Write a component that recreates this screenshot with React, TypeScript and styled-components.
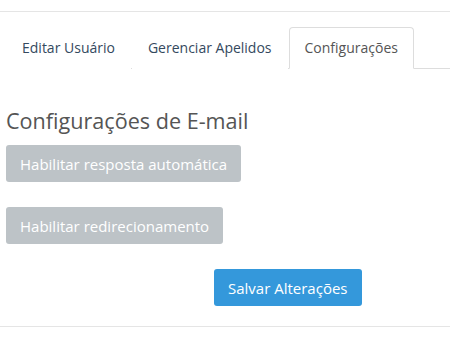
import React from 'react';
import styled, { createGlobalStyle } from 'styled-components';

const GlobalStyle = createGlobalStyle`
  body {
    margin: 0;
    background: #fff;
    font-family: "Open Sans", "Noto Sans", sans-serif;
  }
`;

const StyledPage = styled.div`
  width: 450px;
  height: 337px;
  overflow: hidden;
  padding-top: 11px;
  box-sizing: border-box;
`;

const StyledPanel = styled.div`
  border-top: 1px solid #e5e5e5;
  border-bottom: 1px solid #e5e5e5;
  padding: 15px 0 20px 6px;
`;

const StyledTabs = styled.ul`
  display: flex;
  margin: 0;
  padding: 0;
  list-style: none;
  border-bottom: 1px solid #ddd;
`;

const StyledTab = styled.li<TabProps>`
  margin-right: 1px;
  margin-bottom: -1px;
  padding: 10px 15px;
  font-size: 14px;
  line-height: 20px;
  color: ${props => (props.active ? '#555' : '#34495e')};
  background: #fff;
  border: 1px solid ${props => (props.active ? '#ddd' : 'transparent')};
  border-bottom-color: ${props => (props.active ? '#fff' : 'transparent')};
  border-radius: 4px 4px 0 0;
`;

interface TabProps {
  active?: boolean;
}

const StyledContent = styled.div`
  padding-top: 40px;
  display: flex;
  flex-direction: column;
  align-items: flex-start;
`;

const StyledHeading = styled.h3`
  margin: 0 0 12px;
  font-size: 21.6px;
  line-height: 24px;
  font-weight: 400;
  color: #555;
`;

const StyledButton = styled.button<ButtonProps>`
  height: 37px;
  padding: 0 14px;
  margin-bottom: ${props => props.gap || '0'};
  margin-left: ${props => props.offset || '0'};
  font-family: inherit;
  font-size: 15px;
  color: #fff;
  background: ${props => (props.primary ? '#3498db' : '#bdc3c7')};
  border: none;
  border-radius: 3px;
`;

interface ButtonProps {
  primary?: boolean;
  gap?: string;
  offset?: string;
}

export default function App() {
  return (
    <>
      <GlobalStyle />
      <StyledPage>
        <StyledPanel>
          <StyledTabs>
            <StyledTab>Editar Usuário</StyledTab>
            <StyledTab>Gerenciar Apelidos</StyledTab>
            <StyledTab active>Configurações</StyledTab>
          </StyledTabs>
          <StyledContent>
            <StyledHeading>Configurações de E-mail</StyledHeading>
            <StyledButton gap="25px">Habilitar resposta automática</StyledButton>
            <StyledButton gap="25px">Habilitar redirecionamento</StyledButton>
            <StyledButton primary offset="208px">Salvar Alterações</StyledButton>
          </StyledContent>
        </StyledPanel>
      </StyledPage>
    </>
  );
}
